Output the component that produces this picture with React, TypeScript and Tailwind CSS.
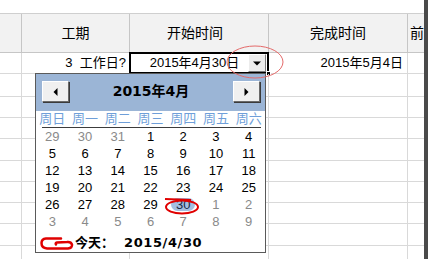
import React from 'react';

const rowHeights = [
  'h-[21px]',
  'h-[23px]',
  'h-[21px]',
  'h-[21px]',
  'h-[22px]',
  'h-[21px]',
  'h-[21px]',
  'h-[21px]',
  'h-[22px]',
  'h-[21px]',
];

const weekdays = ['周日', '周一', '周二', '周三', '周四', '周五', '周六'];

// [day, inMonth]
const weeks: [number, boolean][][] = [
  [[29, false], [30, false], [31, false], [1, true], [2, true], [3, true], [4, true]],
  [[5, true], [6, true], [7, true], [8, true], [9, true], [10, true], [11, true]],
  [[12, true], [13, true], [14, true], [15, true], [16, true], [17, true], [18, true]],
  [[19, true], [20, true], [21, true], [22, true], [23, true], [24, true], [25, true]],
  [[26, true], [27, true], [28, true], [29, true], [30, true], [1, false], [2, false]],
  [[3, false], [4, false], [5, false], [6, false], [7, false], [8, false], [9, false]],
];

const NavButton = ({ dir }: { dir: 'left' | 'right' }) => (
  <div className="w-[27px] h-[21px] bg-[#f0f0f0] border-t border-l border-t-white border-l-white border-r border-b border-r-[#6a6a6a] border-b-[#6a6a6a] shadow-[1px_1px_0_#3a3a3a] flex items-center justify-center">
    <svg width="5" height="8" viewBox="0 0 5 8">
      {dir === 'left' ? (
        <polygon points="4.5,0 4.5,8 0.5,4" fill="#000" />
      ) : (
        <polygon points="0.5,0 0.5,8 4.5,4" fill="#000" />
      )}
    </svg>
  </div>
);

const Calendar = () => (
  <div className="absolute left-[35px] top-[73px] w-[231px] h-[180px] border border-[#5a5a5a] bg-white z-10 flex flex-col">
    {/* Month header */}
    <div className="h-[37px] bg-[#9bb5d6] flex items-start justify-between pl-[6px] pr-[5px] pt-[7px]">
      <NavButton dir="left" />
      <div className="font-['DejaVu_Sans','Noto_Sans_CJK_SC',sans-serif] font-bold text-[14px] leading-[21px] text-black">
        2015年4月
      </div>
      <NavButton dir="right" />
    </div>

    {/* Weekday labels */}
    <div className="grid grid-cols-7 h-[16px] items-center text-[13px] leading-[16px] text-[#6f9fd9]">
      {weekdays.map((w) => (
        <div key={w} className="text-center">
          {w}
        </div>
      ))}
    </div>
    <div className="h-px ml-[6px] mr-[4px] bg-[#3c3c3c]" />

    {/* Day grid */}
    <div className="flex flex-col text-[13px] font-['Liberation_Sans',sans-serif]">
      {weeks.map((week, wi) => (
        <div key={wi} className="grid grid-cols-7 h-[17px] items-center">
          {week.map(([d, inMonth], di) => {
            const selected = wi === 4 && di === 4;
            return (
              <div key={di} className="flex justify-center">
                {selected ? (
                  <span className="px-[5px] rounded-full bg-[#a4bfe2] text-[#1a2a44] leading-[13px]">
                    {d}
                  </span>
                ) : (
                  <span className={inMonth ? 'text-black leading-[17px]' : 'text-[#8a8a8a] leading-[17px]'}>
                    {d}
                  </span>
                )}
              </div>
            );
          })}
        </div>
      ))}
    </div>

    {/* Today */}
    <div className="h-[21px] flex items-center gap-[10px] pl-[39px] pt-[5px] font-['DejaVu_Sans','Noto_Sans_CJK_SC',sans-serif] font-bold text-[13px] text-black">
      <span>今天：</span>
      <span className="tracking-[0.6px]">2015/4/30</span>
    </div>
  </div>
);

const Annotations = () => (
  <svg
    className="absolute left-0 top-0 z-20 pointer-events-none"
    width="428"
    height="259"
    viewBox="0 0 428 259"
  >
    <ellipse cx="255" cy="62" rx="28" ry="16" fill="none" stroke="#e46a6a" strokeWidth="1" />
    <path d="M165 199 L191 200" stroke="#e00000" strokeWidth="2" fill="none" />
    <ellipse cx="182" cy="207" rx="16" ry="6.5" fill="none" stroke="#e00000" strokeWidth="2" />
    <path
      d="M61 238.5 L46 238.5 Q41.5 239 41.5 243 Q41.5 248 47 248.5 L68 248.5 Q72.5 248 72 244.5 Q71 241.5 67 242 L57 242.5 Q55 243 56 244.5"
      fill="none"
      stroke="#e00000"
      strokeWidth="2.5"
      strokeLinecap="round"
      strokeLinejoin="round"
    />
  </svg>
);

export default function App() {
  return (
    <div className="relative w-[428px] h-[259px] overflow-hidden bg-white flex font-['Liberation_Sans','Noto_Sans_CJK_SC',sans-serif] text-black">
      <div className="w-[424px] flex flex-col">
        <div className="h-[14px] shrink-0 border-b border-[#cfcfcf]" />

        {/* Header row */}
        <div className="h-[39px] shrink-0 flex bg-[#f2f2f2] border-b border-[#c6c6c6] text-[14px]">
          <div className="w-[22px] border-r border-[#c6c6c6]" />
          <div className="w-[108px] border-r border-[#c6c6c6] flex items-center justify-center">工期</div>
          <div className="w-[139px] border-r border-[#c6c6c6] flex items-center justify-center pr-[8px]">开始时间</div>
          <div className="w-[139px] border-r border-[#c6c6c6] flex items-center justify-center">完成时间</div>
          <div className="w-[16px] flex items-center pl-[2px]">前</div>
        </div>

        {/* Body rows */}
        {rowHeights.map((h, i) => (
          <div key={i} className={`${h} shrink-0 flex border-b border-[#d9d9d9] text-[13px]`}>
            <div className="w-[22px] border-r border-[#d9d9d9]" />
            <div className="w-[108px] border-r border-[#d9d9d9] flex items-center justify-end pr-[3px] whitespace-pre">
              {i === 0 ? '3  工作日?' : ''}
            </div>
            <div className="w-[139px] border-r border-[#d9d9d9] relative">
              {i === 0 && (
                <div className="absolute -left-[1px] -top-[1px] w-[140px] h-[22px] border-2 border-black bg-white flex items-center">
                  <div className="flex-1 text-center pl-[10px] whitespace-nowrap">2015年4月30日</div>
                  <div className="w-[18px] h-[18px] mr-[1px] bg-[#ececec] border border-t-white border-l-white border-r-[#7a7a7a] border-b-[#7a7a7a] flex items-center justify-center">
                    <svg width="8" height="5" viewBox="0 0 8 5">
                      <polygon points="0,0.5 8,0.5 4,4.5" fill="#000" />
                    </svg>
                  </div>
                  <div className="absolute -right-[4px] -bottom-[4px] w-[5px] h-[5px] bg-black border border-white" />
                </div>
              )}
            </div>
            <div className="w-[139px] border-r border-[#d9d9d9] flex items-center justify-end pr-[4px] whitespace-nowrap">
              {i === 0 ? '2015年5月4日' : ''}
            </div>
            <div className="w-[16px]" />
          </div>
        ))}
      </div>
      <div className="w-[4px] bg-[#4a4a4a]" />

      <Calendar />
      <Annotations />
    </div>
  );
}
